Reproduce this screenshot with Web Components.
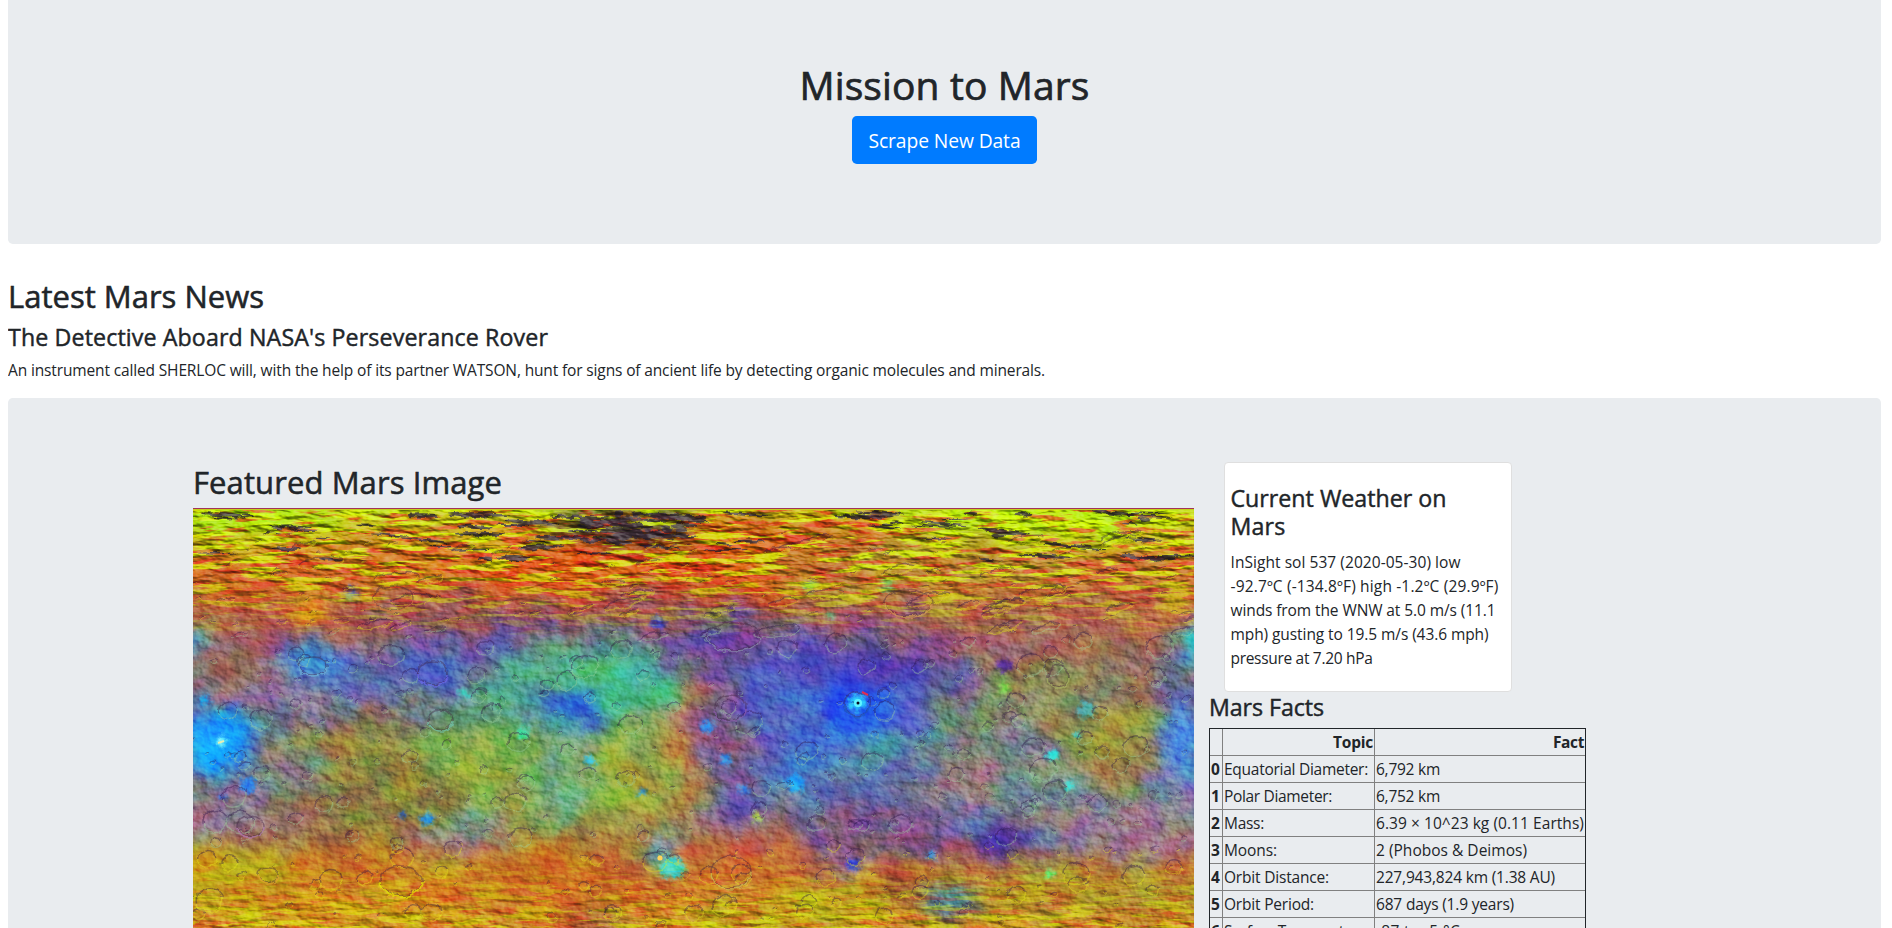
<!DOCTYPE html>
<html lang="en">
<head>
<meta charset="utf-8">
<title>Mission to Mars</title>
<style>
html,body{margin:0;background:#fff;overflow:hidden;height:928px}
body{font-family:"Open Sans","Noto Sans",sans-serif;color:#212529;font-size:15.5px;line-height:24px}
</style>
</head>
<body>
<mars-page></mars-page>
<script>
const define=(name,html,extra)=>customElements.define(name,class extends HTMLElement{
  connectedCallback(){
    if(this.shadowRoot)return;
    this.attachShadow({mode:'open'}).innerHTML=html;
    if(extra)extra.call(this,this.shadowRoot);
  }
});

/* one line of text tracked to a measure of w pixels */
define('fit-line','<style>:host{display:inline-block;white-space:nowrap}</style><slot></slot>',function(){
  const w=+this.getAttribute('w');
  if(!w)return;
  const nat=this.getBoundingClientRect().width;
  this.style.letterSpacing=((w-nat)/this.textContent.length)+'px';
});

define('ui-heading',`<style>
:host{display:block;font-weight:500;font-size:31px;line-height:38.4px;padding-top:1px;margin-bottom:7px;-webkit-text-stroke:.55px #212529}
:host([size="1"]){font-size:39px;line-height:48px;-webkit-text-stroke-width:.7px}
:host([size="3"]){font-size:23.2px;line-height:28.8px;padding-top:.6px;margin-bottom:6.6px;-webkit-text-stroke-width:.45px}
</style><slot></slot>`);

define('ui-jumbotron',`<style>:host{display:block;box-sizing:border-box;background:#e9ecef;border-radius:4.8px;padding:64px 32px}</style><slot></slot>`);

define('ui-button',`<style>:host{display:inline-block}
a{display:block;box-sizing:border-box;width:185px;height:48px;background:#007bff;color:#fff;border-radius:4.8px;font-size:19.3px;line-height:49.5px;text-align:center;cursor:pointer}</style><a><slot></slot></a>`);

define('weather-card',`<style>
:host{display:block;box-sizing:border-box;width:288px;height:230px;margin-left:15px;background:#fff;border:1px solid #dfdfdf;border-radius:4px;padding:20px 5.5px 0}
p{margin:0}p fit-line{display:block;width:max-content}
ui-heading{margin-bottom:9.3px}
ui-heading fit-line{display:block;width:max-content}
</style>
<ui-heading size="3"><fit-line w="216">Current Weather on</fit-line><fit-line w="55">Mars</fit-line></ui-heading>
<p><fit-line w="230">InSight sol 537 (2020-05-30) low</fit-line>
<fit-line w="268">-92.7ºC (-134.8ºF) high -1.2ºC (29.9ºF)</fit-line>
<fit-line w="265">winds from the WNW at 5.0 m/s (11.1</fit-line>
<fit-line w="258">mph) gusting to 19.5 m/s (43.6 mph)</fit-line>
<fit-line w="142">pressure at 7.20 hPa</fit-line></p>`);

const facts=[['Equatorial Diameter:',144,'6,792 km',64],['Polar Diameter:',108,'6,752 km',64],['Mass:',40,'6.39 × 10^23 kg (0.11 Earths)',208],
['Moons:',53,'2 (Phobos & Deimos)',151],['Orbit Distance:',105,'227,943,824 km (1.38 AU)',179],['Orbit Period:',90,'687 days (1.9 years)',138],
['Surface Temperature:',146,'-87 to -5 °C',84]];
define('facts-table',`<style>
:host{display:block}
table{border-collapse:collapse;table-layout:fixed;width:377px;border:1px solid #212529}
th,td{border:1px inset #808080;padding:1px;height:24px;line-height:24px;white-space:nowrap;text-align:left;font-weight:400}
th{font-weight:700}thead th{text-align:right}
table,th,td{box-sizing:border-box}tr{height:27px}
</style><table><colgroup><col style="width:13px"><col style="width:152px"><col style="width:211px"></colgroup>
<thead><tr><th></th><th><fit-line w="40">Topic</fit-line></th><th><fit-line w="31">Fact</fit-line></th></tr></thead><tbody>`+
facts.map((f,i)=>`<tr><th><fit-line w="9">${i}</fit-line></th><td><fit-line w="${f[1]}">${f[0]}</fit-line></td><td><fit-line w="${f[3]}">${f[2].replace('&','&amp;')}</fit-line></td></tr>`).join('')+`</tbody></table>`);

/* false-colour relief map */
define('mars-map',`<style>:host{display:block;width:1001px;height:500px;overflow:hidden}svg{display:block}</style><div></div>`,function(root){
  let s=7;const R=()=>(s=(s*16807)%2147483647)/2147483647;
  // x, y, rx, ry, colour, opacity
  const blobs=[
   [60,14,80,14,'#a5ff00',.8],[430,20,80,16,'#201020',.8],[600,22,100,16,'#d04a10',.7],[850,18,140,16,'#b8ff00',.85],
   [240,75,250,26,'#d56a14',.8],[420,62,130,28,'#ec500a',.7],[560,60,90,25,'#e4540c',.7],[900,80,150,38,'#cc6c2c',.8],[720,60,130,28,'#b88a28',.8],
   [120,112,130,25,'#b86048',.7],[115,108,16,12,'#ffae00',1],[280,112,110,24,'#84486a',.7],[470,110,90,30,'#844d6b',.6],
   [110,135,35,9,'#473aae',.7],[540,130,60,25,'#4c40a4',.75],[700,132,130,30,'#885478',.8],[860,122,110,30,'#a86654',.7],
   [330,142,120,20,'#5f4fa8',.65],[60,165,60,25,'#a66a50',.7],[175,185,100,38,'#7267a4',.7],[120,157,30,14,'#2e9cf0',.85],
   [235,164,26,15,'#3538f4',.9],[290,170,130,30,'#5072b4',.6],[395,170,80,38,'#54a494',.8],[0,132,10,12,'#00c9ff',1],
   [26,236,34,34,'#0c94ff',1],[12,230,20,20,'#18a5ff',1],[390,195,105,55,'#4aa488',.7],[380,203,34,26,'#2255e8',.9],[390,172,32,14,'#62e542',.5],[440,190,30,48,'#3cc49a',.65],
   [120,210,70,30,'#7c7688',.5],[210,250,110,45,'#8c8438',.75],[270,232,45,35,'#64ac68',.65],[340,270,100,50,'#88b03e',.8],[455,270,45,60,'#a0aa35',.75],[367,262,30,50,'#5aaca8',.5],
   [95,275,55,30,'#78808a',.7],[50,312,95,25,'#88689a',.75],[170,310,90,25,'#946840',.8],[260,325,45,22,'#72889a',.8],[200,285,70,40,'#8c8438',.7],
   [500,225,22,55,'#c86e3c',.85],[540,220,40,60,'#745090',.75],[625,190,70,55,'#3e62d8',.75],[665,196,32,26,'#123cff',1],[690,235,50,45,'#3270e4',.75],[620,262,50,32,'#3280e0',.7],[660,262,26,28,'#4a6ebc',.6],
   [735,165,34,18,'#3c42c8',.7],[665,158,55,20,'#5038ac',.7],[710,260,60,32,'#5c9088',.65],[815,185,40,26,'#7c9c48',.7],[890,185,65,38,'#988440',.7],[860,230,75,40,'#7c8c5c',.8],[930,255,75,50,'#9a8e3a',.8],[825,250,35,40,'#7480a0',.65],
   [1000,132,12,18,'#00ecff',1],[990,240,22,36,'#2e84ff',.85],[985,280,28,22,'#5b7ccc',.8],[770,290,65,35,'#a67668',.8],[680,295,80,38,'#5860ac',.6],[850,300,60,40,'#6c8c94',.8],[940,320,70,30,'#8e7098',.8],
   [550,308,36,20,'#4448cc',.8],[580,330,120,22,'#a86c64',.6],[700,325,85,24,'#784e88',.8],[812,332,34,20,'#4c2ea4',.9],[775,312,18,8,'#5380f4',.9],
   [30,365,80,32,'#c0a814',.8],[180,365,80,25,'#d07420',.8],[310,370,110,28,'#d0801e',.9],[410,380,90,30,'#cc5a20',.6],[473,352,22,18,'#15bae4',.95],[540,365,70,28,'#d2662c',.9],
   [650,358,18,8,'#4444cf',.9],[685,370,24,8,'#f0dc00',.9],[703,376,16,14,'#80183e',.9],[757,394,28,11,'#08998f',1],[755,397,13,8,'#163ed8',1],[850,368,20,8,'#83f22a',.9],
   [920,385,130,25,'#b28e2c',.85],[600,405,90,22,'#bcb014',.8],[400,418,22,12,'#806c4b',.8],[140,410,120,22,'#d49814',.8]];
  // bright ejecta and small pits
  const spots=[[28,233,5,'#78ffff'],[13,192,4,'#00b4ff'],[55,277,8,'#2190f5'],[30,289,3,'#2096ff'],[234,311,6,'#1c8df8'],[210,307,3,'#1c78e8'],[271,186,4,'#25d8b4'],[330,225,5,'#35edb0'],[397,253,5,'#21c8ff'],
   [465,115,7,'#323cd0'],[159,86,7,'#4763b5'],[664,194,8,'#29d5ff'],[479,360,11,'#22d8e8'],[449,285,4,'#2697de'],[514,218,6,'#20a0ff'],[551,281,5,'#2786f0'],[564,309,4,'#b4e83c'],[860,247,5,'#20f3e8'],[877,277,4,'#20ebe8'],[883,227,3,'#28e5d8'],
   [894,202,8,'#50b8b8'],[812,180,5,'#75d858'],[738,347,4,'#269df0'],[857,366,4,'#20ff70'],[660,357,6,'#153fe8'],[617,78,6,'#6fb470'],[694,77,7,'#78c460'],[637,108,5,'#62a777'],[812,158,7,'#542d98'],[533,252,5,'#218fee'],[602,275,8,'#18a6ff']];
  const el=(b,k=1)=>`<ellipse cx="${b[0]}" cy="${b[1]}" rx="${b[2]*k}" ry="${b[3]*k}" fill="${b[4]}" opacity="${b[5]}"/>`;
  let craters='';
  for(let i=0;i<650;i++){
    const x=R()*1000,y=24+R()*396,r=1.4+Math.pow(R(),4)*12,f=y<130?.42:.85,rx=y<130?r*1.8:r,ry=r*f,t=-20+R()*15;
    craters+=`<g transform="translate(${x.toFixed(1)} ${y.toFixed(1)}) rotate(${t.toFixed(0)})" fill="none" stroke-width="${r>5?1.5:1.1}"><path d="M${-rx} 0A${rx} ${ry} 0 0 1 ${rx} 0" stroke="#2b1248" opacity=".6"/><path d="M${-rx} 0A${rx} ${ry} 0 0 0 ${rx} 0" stroke="${y<120||y>335?'#e8e820':'#a2d3a0'}" opacity=".6"/></g>`;
  }
  const big=[[208,373,21,15,'#e4ee00'],[538,364,20,16,'#c9c957'],[57,318,14,10,'#b079b9'],[248,212,12,10,'#72c5b0'],[240,165,15,12,'#6f6bed'],[200,90,20,12,'#d07045'],[541,128,27,14,'#8a94aa'],[866,168,11,11,'#aab467'],[537,200,15,13,'#8d5cae'],[120,158,14,9,'#73b8d9'],[75,367,10,7,'#e0a030'],[715,95,24,13,'#d69c54'],[664,196,13,12,'#1f55b8']];
  for(const b of big)craters+=`<g fill="none" stroke-width="1.6"><ellipse cx="${b[0]}" cy="${b[1]}" rx="${b[2]}" ry="${b[3]}" stroke="#40203f" opacity=".6"/><path d="M${b[0]-b[2]} ${b[1]+1}A${b[2]} ${b[3]} 0 0 0 ${b[0]+b[2]} ${b[1]+1}" stroke="${b[4]}"/></g>`;
  let dark='';
  for(let i=0;i<75;i++){const x=R()*1000,y=5+Math.pow(R(),1.6)*48;dark+=`<ellipse cx="${x}" cy="${y}" rx="${6+R()*22}" ry="${.7+R()*1.5}" transform="rotate(${R()*8-2} ${x} ${y})"/>`}
  for(let i=0;i<60;i++){const x=385+R()*120,y=4+R()*30;dark+=`<ellipse cx="${x}" cy="${y}" rx="${3+R()*13}" ry="${1+R()*1.8}"/>`}
  const noise=(id,fx,fy,seed,m)=>`<filter id="${id}" x="0" y="0" width="1" height="1" color-interpolation-filters="sRGB"><feTurbulence type="fractalNoise" baseFrequency="${fx} ${fy}" numOctaves="4" seed="${seed}"/><feColorMatrix values="${m}"/></filter>`;
  const relief=(id,fx,fy,sc,seed)=>`<filter id="${id}" x="0" y="0" width="1" height="1" color-interpolation-filters="sRGB"><feTurbulence type="fractalNoise" baseFrequency="${fx} ${fy}" numOctaves="4" seed="${seed}"/><feDiffuseLighting surfaceScale="${sc}" lighting-color="#bcbcbc"><feDistantLight azimuth="145" elevation="45"/></feDiffuseLighting></filter>`;
  root.querySelector('div').innerHTML=`<svg width="1001" height="500" viewBox="0 0 1001 500"><defs>
   <linearGradient id="base" x2="0" y2="1"><stop offset="0" stop-color="#c0e010"/><stop offset=".05" stop-color="#d0a812"/><stop offset=".12" stop-color="#d8741a"/><stop offset=".2" stop-color="#b86638"/><stop offset=".26" stop-color="#8c5a6c"/><stop offset=".36" stop-color="#70688c"/><stop offset=".48" stop-color="#7c7c70"/><stop offset=".6" stop-color="#8c785c"/><stop offset=".7" stop-color="#b87834"/><stop offset=".78" stop-color="#d08a1c"/><stop offset="1" stop-color="#d49216"/></linearGradient>
   <linearGradient id="ft" x2="0" y2="1"><stop offset="0" stop-color="#fff"/><stop offset=".12" stop-color="#fff"/><stop offset=".18" stop-color="#999"/><stop offset=".27" stop-color="#000"/><stop offset=".68" stop-color="#000"/><stop offset=".84" stop-color="#aaa"/><stop offset="1" stop-color="#aaa"/></linearGradient>
   <linearGradient id="fm" x2="0" y2="1"><stop offset=".08" stop-color="#000"/><stop offset=".2" stop-color="#fff"/></linearGradient>
   <mask id="poles"><rect width="1001" height="500" fill="url(#ft)"/></mask><mask id="mid"><rect width="1001" height="500" fill="url(#fm)"/></mask>
   <filter id="soft" x="-.1" y="-.1" width="1.2" height="1.2" color-interpolation-filters="sRGB"><feGaussianBlur stdDeviation="11" result="b"/><feTurbulence type="fractalNoise" baseFrequency=".03" numOctaves="5" seed="4" result="n"/><feDisplacementMap in="b" in2="n" scale="30" xChannelSelector="R" yChannelSelector="G"/></filter>
   <filter id="spot" x="-.1" y="-.1" width="1.2" height="1.2" color-interpolation-filters="sRGB"><feGaussianBlur stdDeviation="2.2" result="b"/><feTurbulence type="fractalNoise" baseFrequency=".15" numOctaves="3" seed="8" result="n"/><feDisplacementMap in="b" in2="n" scale="10" xChannelSelector="R" yChannelSelector="G"/></filter>
   <filter id="warp" x="0" y="0" width="1" height="1" color-interpolation-filters="sRGB"><feTurbulence type="fractalNoise" baseFrequency=".1" numOctaves="3" seed="3" result="n"/><feDisplacementMap in="SourceGraphic" in2="n" scale="6" xChannelSelector="R" yChannelSelector="G"/></filter>
   ${noise('lime',.022,.16,11,'0 0 0 0 .85  0 0 0 0 1  0 0 0 0 0  9 0 0 0 -4.7')}
   ${noise('red',.026,.15,23,'0 0 0 0 .92  0 0 0 0 .12  0 0 0 0 .12  0 8 0 0 -4.2')}
   ${noise('tint',.03,.04,31,'2.2 0 0 0 -.6  0 2.2 0 0 -.6  0 0 2.2 0 -.6  0 0 0 0 1')}
   ${relief('rt',.035,.14,5,5)}${relief('rm',.09,.13,2,9)}
   </defs>
   <g style="isolation:isolate"><rect width="1001" height="500" fill="url(#base)"/>
   <g filter="url(#soft)">${blobs.map(b=>el(b,1.12)).join('')}</g>
   <g filter="url(#spot)">${spots.map(b=>el([b[0],b[1],b[2]*1.15,b[2],b[3],.9])).join('')}</g>
   <rect width="1001" height="500" filter="url(#tint)" opacity=".2" style="mix-blend-mode:overlay"/>
   <g mask="url(#poles)"><rect width="1001" height="500" filter="url(#red)" opacity=".6"/><rect width="1001" height="500" filter="url(#lime)" opacity=".75"/></g>
   <g fill="#352b3c" filter="url(#warp)" opacity=".85">${dark}</g>
   <g style="mix-blend-mode:hard-light" opacity=".65"><g mask="url(#poles)"><rect width="1001" height="500" filter="url(#rt)"/></g></g>
   <g style="mix-blend-mode:overlay" opacity=".65"><g mask="url(#mid)"><rect width="1001" height="500" filter="url(#rm)"/></g></g>
   <g filter="url(#warp)" opacity=".65">${craters}</g>
   <circle cx="665" cy="195" r="4" fill="#5ff5ff"/><circle cx="665" cy="195" r="1.5" fill="#080820"/><path d="M669 184l6 3" stroke="#e32b50" stroke-width="2"/>
   <circle cx="467" cy="350" r="2.6" fill="#ffd45c"/><path d="M25 235l6-2" stroke="#e7efb4" stroke-width="2"/>
   <path d="M0 .5H1001" stroke="#a33458"/><path d="M0 1.5H1001" stroke="#c4d219"/></g></svg>`;
});

define('mars-page',`<style>
:host{display:block;width:1873px;height:928px;margin-left:8px;overflow:hidden}
.top{height:248px;margin-top:-4px;text-align:center}
.news{padding-top:32px;height:122px}
.news p{margin:0}
.feature{height:700px}
.row{display:grid;grid-template-columns:1001px 377px;column-gap:15px;margin-left:153px}
.side ui-heading{margin:0 0 6.6px}
</style>
<ui-jumbotron class="top"><ui-heading size="1"><fit-line w="290">Mission to Mars</fit-line></ui-heading><ui-button><fit-line w="152">Scrape New Data</fit-line></ui-button></ui-jumbotron>
<section class="news"><ui-heading><fit-line w="256">Latest Mars News</fit-line></ui-heading>
<ui-heading size="3"><fit-line w="540">The Detective Aboard NASA's Perseverance Rover</fit-line></ui-heading>
<p><fit-line w="1037">An instrument called SHERLOC will, with the help of its partner WATSON, hunt for signs of ancient life by detecting organic molecules and minerals.</fit-line></p></section>
<ui-jumbotron class="feature"><div class="row"><div><ui-heading><fit-line w="309">Featured Mars Image</fit-line></ui-heading><mars-map></mars-map></div>
<div class="side"><weather-card></weather-card><ui-heading size="3"><fit-line w="115">Mars Facts</fit-line></ui-heading><facts-table></facts-table></div></div></ui-jumbotron>`);
</script>
</body>
</html>
